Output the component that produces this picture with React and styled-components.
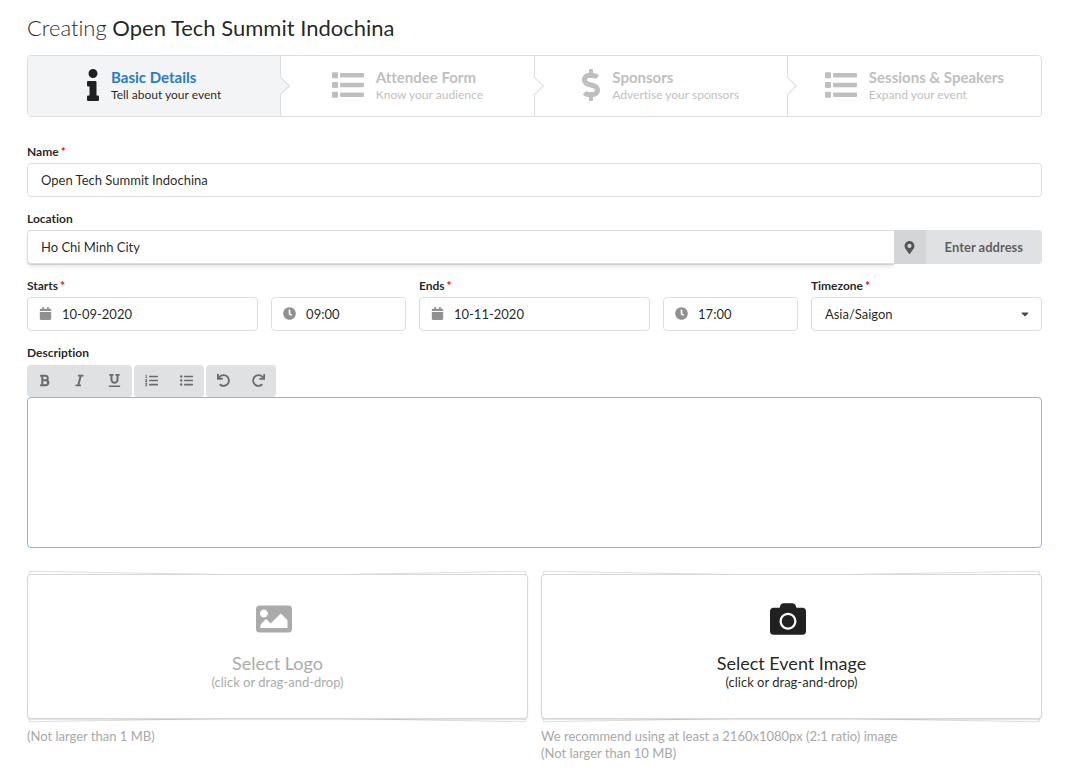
import React from "react";
import styled, { createGlobalStyle, css } from "styled-components";
import {
  FaBold,
  FaCalendar,
  FaCamera,
  FaCaretDown,
  FaClock,
  FaDollarSign,
  FaImage,
  FaInfo,
  FaItalic,
  FaListOl,
  FaListUl,
  FaMapMarkerAlt,
  FaRedo,
  FaUnderline,
  FaUndo,
} from "react-icons/fa";

const GlobalStyle = createGlobalStyle`
  *, *::before, *::after { box-sizing: border-box; }
  body {
    margin: 0;
    background: #fff;
    color: rgba(0, 0, 0, 0.87);
    font-family: Lato, "Liberation Sans", sans-serif;
    font-size: 13px;
    line-height: 17px;
    font-variant-ligatures: none;
  }
  button, input, select, textarea { font: inherit; color: inherit; }
`;

const Page = styled.main`
  padding: 14px 28px 16px 27px;
`;

const Title = styled.h1`
  margin: 0 0 13px;
  font-size: 22px;
  line-height: 28px;
  font-weight: 400;
`;

const TitleLead = styled.span`
  font-weight: 300;
`;

const Steps = styled.nav`
  display: grid;
  grid-template-columns: repeat(4, 1fr);
  margin-bottom: 26px;
  border: 1px solid #dededf;
  border-radius: 4px;
`;

const Step = styled.a`
  position: relative;
  display: flex;
  align-items: center;
  justify-content: center;
  gap: 12px;
  height: 60px;
  text-decoration: none;
  color: ${(p) => (p.$active ? "rgba(0, 0, 0, 0.87)" : "#bfbfbf")};
  background: ${(p) => (p.$active ? "#f3f4f5" : "#fff")};
  border-radius: 4px;

  > svg {
    width: ${(p) => p.$iconWidth}px;
    height: 32px;
    margin-bottom: 2px;
  }

  &:not(:last-child) {
    border-right: 1px solid #dededf;
    border-radius: 0;
  }

  &:not(:last-child)::after {
    content: "";
    position: absolute;
    z-index: 1;
    top: 50%;
    right: 0;
    width: 14px;
    height: 14px;
    background: inherit;
    border: solid #dededf;
    border-width: 0 1px 1px 0;
    transform: translate(50%, -50%) rotate(-45deg);
  }
`;

const StepText = styled.span`
  display: flex;
  flex-direction: column;
`;

const StepTitle = styled.strong`
  font-size: 15px;
  line-height: 17px;
  color: ${(p) => (p.$active ? "#2a7bc8" : "inherit")};
`;

const StepNote = styled.span`
  font-size: 12px;
  line-height: 17px;
`;

const Form = styled.form`
  display: flex;
  flex-direction: column;
  gap: 13px;
`;

const Field = styled.div`
  display: flex;
  flex-direction: column;
  justify-content: flex-end;
  gap: 3px;
  min-width: 0;
`;

const Label = styled.label`
  font-size: 12px;
  line-height: 17px;
  font-weight: 700;
`;

const Required = styled.span`
  margin-left: 2px;
  color: #f00;
`;

const control = css`
  width: 100%;
  height: 34px;
  padding: 0 13px;
  background: #fff;
  border: 1px solid #dededf;
  border-radius: 4px;
  outline: none;
`;

const TextInput = styled.input`
  ${control}
`;

const LocationRow = styled.div`
  display: flex;
`;

const LocationInput = styled.input`
  ${control}
  flex: 1;
  min-width: 0;
  border-right: 0;
  border-radius: 4px 0 0 4px;
  box-shadow: 0 1px 1px rgba(34, 36, 38, 0.15), 0 4px 4px -1px rgba(34, 36, 38, 0.1);
`;

const AddressButton = styled.button`
  position: relative;
  display: flex;
  height: 34px;
  padding: 0;
  overflow: hidden;
  border: 0;
  border-radius: 0 4px 4px 0;
  background: #e0e1e2;
  color: rgba(0, 0, 0, 0.6);
  font-weight: 700;
  line-height: 34px;
`;

const AddressIcon = styled.span`
  display: flex;
  align-items: center;
  justify-content: center;
  width: 32px;
  height: 34px;
  background: #d4d5d6;
`;

const AddressText = styled.span`
  padding: 0 19px;
`;

const Schedule = styled.div`
  display: grid;
  grid-template-columns: 12fr 7fr 12fr 7fr 12fr;
  gap: 13px;
`;

const IconControl = styled.div`
  position: relative;

  > svg {
    position: absolute;
    top: 10px;
    left: 12px;
    color: #909090;
    pointer-events: none;
  }

  > input {
    padding-left: 34px;
  }
`;

const SelectControl = styled.div`
  position: relative;

  > svg {
    position: absolute;
    top: 11px;
    right: 11px;
    color: rgba(0, 0, 0, 0.7);
    pointer-events: none;
  }
`;

const Select = styled.select`
  ${control}
  appearance: none;
`;

const Toolbar = styled.div`
  display: flex;
  gap: 2px;
  padding-top: 1px;
`;

const ToolGroup = styled.div`
  display: flex;
  overflow: hidden;
  border-radius: 4px;
  background: #e0e1e2;
`;

const Tool = styled.button`
  display: flex;
  align-items: center;
  justify-content: center;
  width: 35px;
  height: 32px;
  padding: 0 0 2px;
  border: 0;
  background: none;
  color: rgba(0, 0, 0, 0.52);
`;

const Editor = styled.div`
  display: flex;
  flex-direction: column;
`;

const EditorArea = styled.textarea`
  display: block;
  width: 100%;
  height: 151px;
  padding: 10px 13px;
  border: 1px solid #85b7d9;
  border-radius: 4px;
  outline: none;
  resize: none;
`;

const Uploads = styled.div`
  display: grid;
  grid-template-columns: 1fr 1fr;
  gap: 13px;
  padding-top: 13px;
`;

const Upload = styled.div`
  display: flex;
  flex-direction: column;
  gap: 9px;
  isolation: isolate;
`;

const DropZone = styled.label`
  position: relative;
  display: flex;
  flex-direction: column;
  align-items: center;
  height: 145px;
  padding-top: 26px;
  background: #fff;
  border: 1px solid #d8d8d9;
  border-radius: 4px;
  box-shadow: 0 1px 1px rgba(0, 0, 0, 0.12);
  color: ${(p) => (p.$strong ? "rgba(0, 0, 0, 0.87)" : "#ababab")};

  &::before,
  &::after {
    content: "";
    position: absolute;
    z-index: -1;
    inset: 0;
    border: 1px solid #dededf;
    background: #fff;
    transform: rotate(1deg);
  }

  &::after {
    z-index: -2;
    transform: rotate(-1deg);
  }

  > svg {
    margin: 0 8px 16px 0;
  }
`;

const FileInput = styled.input`
  position: absolute;
  width: 1px;
  height: 1px;
  opacity: 0;
`;

const DropTitle = styled.span`
  font-size: 18px;
  line-height: 21px;
`;

const Hint = styled.p`
  margin: 0;
  color: #a8a8a8;
`;

function ListIcon() {
  return (
    <svg viewBox="0 0 32 32" fill="currentColor" aria-hidden="true">
      {[3.2, 13, 22.8].map((y) => (
        <g key={y}>
          <rect x="0" y={y} width="6" height="6" rx="1" />
          <rect x="8" y={y + 0.8} width="24" height="4.4" rx="1" />
        </g>
      ))}
    </svg>
  );
}

const steps = [
  { title: "Basic Details", note: "Tell about your event", icon: FaInfo, iconWidth: 12, active: true },
  { title: "Attendee Form", note: "Know your audience", icon: ListIcon, iconWidth: 32 },
  { title: "Sponsors", note: "Advertise your sponsors", icon: FaDollarSign, iconWidth: 18 },
  { title: "Sessions & Speakers", note: "Expand your event", icon: ListIcon, iconWidth: 32 },
];

const tools = [
  [["Bold", FaBold], ["Italic", FaItalic], ["Underline", FaUnderline]],
  [["Ordered list", FaListOl], ["Unordered list", FaListUl]],
  [["Undo", FaUndo], ["Redo", FaRedo]],
];

function RequiredLabel({ htmlFor, children }) {
  return (
    <Label htmlFor={htmlFor}>
      {children}
      <Required>*</Required>
    </Label>
  );
}

function DateField({ id, label, value }) {
  return (
    <Field>
      <RequiredLabel htmlFor={id}>{label}</RequiredLabel>
      <IconControl>
        <FaCalendar size={13} />
        <TextInput id={id} defaultValue={value} />
      </IconControl>
    </Field>
  );
}

function TimeField({ label, value }) {
  return (
    <Field>
      <IconControl>
        <FaClock size={13} />
        <TextInput aria-label={label} defaultValue={value} />
      </IconControl>
    </Field>
  );
}

function UploadField({ title, icon: Icon, strong, hints }) {
  return (
    <Upload>
      <DropZone $strong={strong}>
        <FileInput type="file" accept="image/*" />
        <Icon size={36} />
        <DropTitle>{title}</DropTitle>
        <span>(click or drag-and-drop)</span>
      </DropZone>
      <div>
        {hints.map((hint) => (
          <Hint key={hint}>{hint}</Hint>
        ))}
      </div>
    </Upload>
  );
}

export default function App() {
  return (
    <Page>
      <GlobalStyle />
      <Title>
        <TitleLead>Creating</TitleLead> Open Tech Summit Indochina
      </Title>
      <Steps>
        {steps.map(({ title, note, icon: Icon, iconWidth, active }) => (
          <Step key={title} href="#" $active={active} $iconWidth={iconWidth}>
            <Icon />
            <StepText>
              <StepTitle $active={active}>{title}</StepTitle>
              <StepNote>{note}</StepNote>
            </StepText>
          </Step>
        ))}
      </Steps>
      <Form>
        <Field>
          <RequiredLabel htmlFor="name">Name</RequiredLabel>
          <TextInput id="name" defaultValue="Open Tech Summit Indochina" />
        </Field>
        <Field>
          <Label htmlFor="location">Location</Label>
          <LocationRow>
            <LocationInput id="location" defaultValue="Ho Chi Minh City" />
            <AddressButton type="button">
              <AddressIcon>
                <FaMapMarkerAlt size={13} />
              </AddressIcon>
              <AddressText>Enter address</AddressText>
            </AddressButton>
          </LocationRow>
        </Field>
        <Schedule>
          <DateField id="starts" label="Starts" value="10-09-2020" />
          <TimeField label="Start time" value="09:00" />
          <DateField id="ends" label="Ends" value="10-11-2020" />
          <TimeField label="End time" value="17:00" />
          <Field>
            <RequiredLabel htmlFor="timezone">Timezone</RequiredLabel>
            <SelectControl>
              <Select id="timezone" defaultValue="Asia/Saigon">
                <option>Asia/Saigon</option>
              </Select>
              <FaCaretDown size={12} />
            </SelectControl>
          </Field>
        </Schedule>
        <Field>
          <Label htmlFor="description">Description</Label>
          <Editor>
            <Toolbar>
              {tools.map((group, index) => (
                <ToolGroup key={index}>
                  {group.map(([name, Icon]) => (
                    <Tool key={name} type="button" aria-label={name}>
                      <Icon size={13} />
                    </Tool>
                  ))}
                </ToolGroup>
              ))}
            </Toolbar>
            <EditorArea id="description" />
          </Editor>
        </Field>
        <Uploads>
          <UploadField title="Select Logo" icon={FaImage} hints={["(Not larger than 1 MB)"]} />
          <UploadField
            title="Select Event Image"
            icon={FaCamera}
            strong
            hints={[
              "We recommend using at least a 2160x1080px (2:1 ratio) image",
              "(Not larger than 10 MB)",
            ]}
          />
        </Uploads>
      </Form>
    </Page>
  );
}
